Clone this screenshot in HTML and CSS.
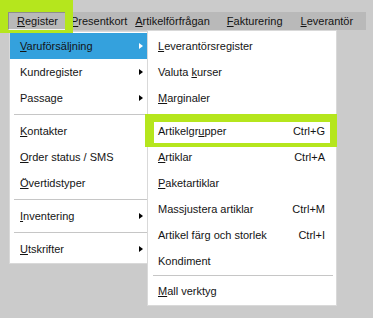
FILE: index.html
```html
<!DOCTYPE html>
<html lang="sv">
<head>
    <meta charset="UTF-8">
    <meta name="viewport" content="width=device-width, initial-scale=1.0">
    <title>Register</title>
    <link rel="stylesheet" href="styles.css">
</head>
<body>
    <div id="menubar">
        <span class="top pressed"><u>R</u>egister</span>
        <span class="top"><u>P</u>resentkort</span>
        <span class="top"><u>A</u>rtikelförfrågan</span>
        <span class="top fakt"><u>F</u>akturering</span>
        <span class="top lev"><u>L</u>everantör</span>
    </div>

    <div id="register" class="menu">
        <div class="item sub active"><span><u>V</u>aruförsäljning</span><i class="arrow"></i></div>
        <div class="item sub"><span>Kundregister</span><i class="arrow"></i></div>
        <div class="item sub"><span>Passage</span><i class="arrow"></i></div>
        <div class="sep"></div>
        <div class="item"><span><u>K</u>ontakter</span></div>
        <div class="item"><span><u>O</u>rder status / SMS</span></div>
        <div class="item"><span><u>Ö</u>vertidstyper</span></div>
        <div class="sep"></div>
        <div class="item sub"><span><u>I</u>nventering</span><i class="arrow"></i></div>
        <div class="sep"></div>
        <div class="item sub"><span><u>U</u>tskrifter</span><i class="arrow"></i></div>
    </div>

    <div id="varu" class="menu">
        <div class="item"><span><u>L</u>everantörsregister</span></div>
        <div class="item"><span>Valuta <u>k</u>urser</span></div>
        <div class="item"><span><u>M</u>arginaler</span></div>
        <div class="sep"></div>
        <div class="item"><span>Artikelgr<u>u</u>pper</span><span class="key">Ctrl+G</span></div>
        <div class="item"><span><u>A</u>rtiklar</span><span class="key">Ctrl+A</span></div>
        <div class="item"><span><u>P</u>aketartiklar</span></div>
        <div class="item"><span>Massjustera artiklar</span><span class="key">Ctrl+M</span></div>
        <div class="item"><span>Artikel färg och storlek</span><span class="key">Ctrl+I</span></div>
        <div class="item"><span>Kondiment</span></div>
        <div class="sep short"></div>
        <div class="item"><span><u>M</u>all verktyg</span></div>
    </div>

    <!-- markeringar -->
    <div class="mark mark_register"></div>
    <div class="mark mark_grupper"></div>
</body>
</html>
```

FILE: styles.css
```css
*{
    font-family: 'Liberation Sans', Arial, sans-serif;
    box-sizing: border-box;
}
body{
    margin: 0;
    height: 318px;
    background: #cbcbcb;
    font-size: 11px;
    color: #141414;
}
u{
    text-decoration: underline;
    text-underline-offset: 1px;
}

#menubar{
    margin-top: 12px;
    width: 366px;
    height: 18px;
    padding-left: 8px;
    background: #b9b9b9;
    display: flex;
    line-height: 18px;
}
.top{
    padding: 0 4px;
    white-space: nowrap;
}
.top.pressed{
    padding: 0 8px;
    line-height: 16px;
    border: 1px solid;
    border-color: #8e8e8e #f4f4f4 #f4f4f4 #8e8e8e;
}
.top.fakt{
    margin-left: 9px;
}
.top.lev{
    margin-left: 10px;
}

.menu{
    position: absolute;
    background: #fff;
    border: 1px solid #d9d9d9;
    display: flex;
    flex-direction: column;
}
#register{
    left: 9px;
    top: 31px;
    width: 139px;
    padding: 1px 0;
}
#varu{
    left: 147px;
    top: 30px;
    width: 190px;
    padding: 2px 0 1px;
}

.item{
    height: 26px;
    display: flex;
    align-items: center;
    justify-content: space-between;
    padding: 0 11px 0 10px;
    white-space: nowrap;
}
.item.sub{
    padding-right: 4px;
}
.item.active{
    background: #34a1dd;
}
.arrow{
    width: 0;
    height: 0;
    border-left: 4px solid #000;
    border-top: 3.5px solid transparent;
    border-bottom: 3.5px solid transparent;
}
.active .arrow{
    border-left-color: #fff;
}

.sep{
    margin: 3px 0 3px 4px;
    border-top: 1px solid #c6c6c6;
}
#varu .sep{
    margin-left: 5px;
    margin-right: 3px;
}
#varu .sep.short{
    margin-top: 1px;
    margin-bottom: 2px;
}

.mark{
    position: absolute;
    border-style: solid;
    border-color: #b5e61d;
}
.mark_register{
    left: 0;
    top: 0;
    width: 73px;
    height: 33px;
    border-width: 12px 8px 3px 8px;
}
.mark_grupper{
    left: 145px;
    top: 114px;
    width: 192px;
    height: 33px;
    border-width: 8px 7px 4px 9px;
}
```
